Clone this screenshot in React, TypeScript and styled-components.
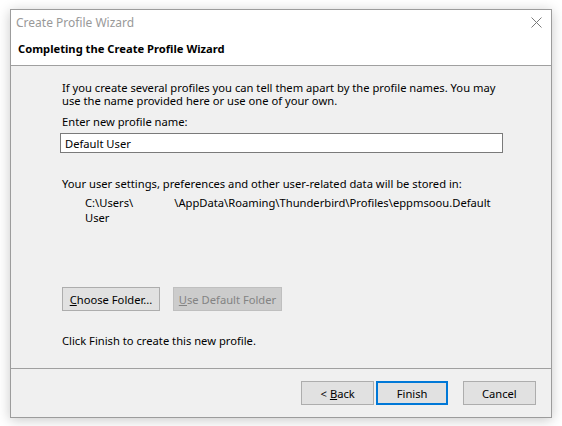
import React from 'react'
import { createGlobalStyle, styled } from 'styled-components'

const GlobalStyle = createGlobalStyle`
  html, body {
    margin: 0;
    padding: 0;
    background: #ffffff;
  }
  body {
    font-family: 'Noto Sans', 'Open Sans', 'Liberation Sans', sans-serif;
    font-size: 11.2px;
    color: #000000;
  }
`

const colors = {
  face: '#f0f0f0',
  border: '#9c9c9c',
  divider: '#a0a0a0',
  button: '#e1e1e1',
  buttonBorder: '#adadad',
  accent: '#0078d7',
}

export default function App() {
  return (
    <>
      <GlobalStyle />
      <Desktop>
        <Window>
          <TitleBar>
            <Caption>Create Profile Wizard</Caption>
            <CloseButton aria-label="Close">
              <svg width="11" height="11" viewBox="0 0 11 11">
                <path d="M0.5 0.5 L10.5 10.5 M10.5 0.5 L0.5 10.5" stroke="#7a7a7a" strokeWidth="1" fill="none" />
              </svg>
            </CloseButton>
          </TitleBar>
          <Header>Completing the Create Profile Wizard</Header>
          <Body>
            <Para>
              If you create several profiles you can tell them apart by the profile names. You may
              use the name provided here or use one of your own.
            </Para>
            <Label>Enter new profile name:</Label>
            <NameInput defaultValue="Default User" />
            <Para $top={24}>Your user settings, preferences and other user-related data will be stored in:</Para>
            <Path>
              <PathLine>
                <span>C:\Users\</span>
                <Hidden />
                <span>\AppData\Roaming\Thunderbird\Profiles\eppmsoou.Default</span>
              </PathLine>
              <PathLine>User</PathLine>
            </Path>
            <FolderRow>
              <Button $width={98}>
                <u>C</u>hoose Folder...
              </Button>
              <Button $width={109} disabled>
                <u>U</u>se Default Folder
              </Button>
            </FolderRow>
            <Para $top={23}>Click Finish to create this new profile.</Para>
          </Body>
          <Footer>
            <Button $width={75}>
              &lt; <u>B</u>ack
            </Button>
            <Button $width={73} $default>
              Finish
            </Button>
            <Spacer />
            <Button $width={75}>Cancel</Button>
          </Footer>
        </Window>
      </Desktop>
    </>
  )
}

const Desktop = styled.div`
  width: 562px;
  height: 426px;
  overflow: hidden;
  padding: 9px 0 0 10px;
  box-sizing: border-box;
`

const Window = styled.div`
  width: 542px;
  height: 409px;
  box-sizing: border-box;
  border: 1px solid ${colors.border};
  background: ${colors.face};
  box-shadow: 0 2px 12px rgba(0, 0, 0, 0.22);
  display: flex;
  flex-direction: column;
`

const TitleBar = styled.div`
  height: 24px;
  background: #ffffff;
  display: flex;
  align-items: center;
  justify-content: space-between;
  padding: 0 9px 0 5px;
  flex-shrink: 0;
`

const Caption = styled.span`
  font-size: 12px;
  color: #999999;
`

const CloseButton = styled.button`
  border: 0;
  background: transparent;
  padding: 0;
  width: 11px;
  height: 11px;
  display: flex;
`

const Header = styled.div`
  height: 32px;
  background: #ffffff;
  border-bottom: 1px solid ${colors.divider};
  font-weight: 700;
  padding: 7px 0 0 7px;
  box-sizing: border-box;
  flex-shrink: 0;
`

const Body = styled.div`
  flex: 1;
  padding: 15px 0 0 51px;
  display: flex;
  flex-direction: column;
  align-items: flex-start;
  border-bottom: 1px solid ${colors.divider};
`

const Para = styled.p<{ $top?: number }>`
  margin: ${(p) => p.$top ?? 0}px 0 0 0;
  width: 445px;
  line-height: 13px;
`

const Label = styled.div`
  margin-top: 8px;
  line-height: 13px;
`

const NameInput = styled.input`
  margin: 5px 0 0 -2px;
  width: 443px;
  height: 20px;
  box-sizing: border-box;
  border: 1px solid #7a7a7a;
  background: #ffffff;
  font: inherit;
  padding: 0 4px;
  outline: none;
`

const Path = styled.div`
  margin: 5px 0 0 23px;
  display: flex;
  flex-direction: column;
`

const PathLine = styled.div`
  display: flex;
  line-height: 15px;
  white-space: nowrap;
`

const Hidden = styled.span`
  width: 41px;
`

const FolderRow = styled.div`
  margin: 62px 0 0 0;
  display: flex;
  gap: 13px;
`

const Button = styled.button<{ $width: number; $default?: boolean }>`
  width: ${(p) => p.$width}px;
  height: 24px;
  box-sizing: border-box;
  font: inherit;
  color: #000000;
  background: ${colors.button};
  border: 1px solid ${colors.buttonBorder};
  padding: 0;
  ${(p) => (p.$default ? `border: 2px solid ${colors.accent};` : '')}

  &:disabled {
    background: #cccccc;
    border-color: #bfbfbf;
    color: #838383;
  }
`

const Footer = styled.div`
  height: 48px;
  box-sizing: border-box;
  display: flex;
  align-items: flex-start;
  padding: 12px 15px 0 290px;
  gap: 2px;
  flex-shrink: 0;
`

const Spacer = styled.div`
  width: 11px;
`
